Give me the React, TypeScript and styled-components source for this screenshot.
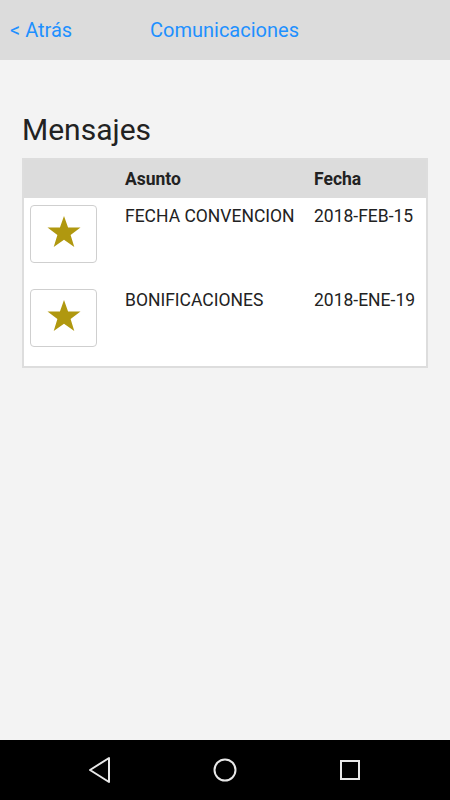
import styled, { createGlobalStyle } from 'styled-components';

const GlobalStyle = createGlobalStyle`
  html, body, #root {
    margin: 0;
    padding: 0;
    height: 100%;
  }
  body {
    font-family: Roboto, "Noto Sans", sans-serif;
    background-color: #f3f3f3;
  }
`;

const Screen = styled.div`
  display: flex;
  flex-direction: column;
  height: 100vh;
`;

const TopBar = styled.header`
  height: 60px;
  flex-shrink: 0;
  background-color: #dcdcdc;
  display: flex;
  align-items: center;
  padding: 0 10px;
  box-sizing: border-box;
  font-size: 20px;
  color: #1e90ff;
`;

const BackLink = styled.span`
  width: 140px;
`;

const Title = styled.span``;

const Main = styled.main`
  flex: 1;
  padding: 50px 22px 0;
`;

const Heading = styled.h1`
  margin: 0 0 8px;
  font-size: 30px;
  font-weight: 400;
  line-height: 40px;
  color: #222;
`;

const Table = styled.div`
  background-color: #dddddd;
  padding: 2px;
`;

const Row = styled.div<{ $head?: boolean }>`
  display: grid;
  grid-template-columns: 101px 189px 1fr;
  height: ${(p) => (p.$head ? '38px' : '84px')};
  align-items: ${(p) => (p.$head ? 'center' : 'start')};
  background-color: ${(p) => (p.$head ? '#dcdcdc' : '#fff')};
  font-size: 17.5px;
  color: #222;
  font-weight: ${(p) => (p.$head ? 700 : 400)};
`;

const Cell = styled.div`
  padding-top: 8px;
`;

const HeadCell = styled.div``;

const StarButton = styled.button`
  margin: 7px 0 0 6px;
  width: 67px;
  height: 58px;
  border: 1px solid #cfcfcf;
  border-radius: 4px;
  background: #fff;
  display: flex;
  align-items: center;
  justify-content: center;
  padding: 0 0 6px;
  box-sizing: border-box;
`;

const NavBar = styled.nav`
  height: 60px;
  flex-shrink: 0;
  background-color: #000;
  display: grid;
  grid-template-columns: repeat(3, 125px);
  justify-content: center;
  align-items: center;
  justify-items: center;
`;

const Star = () => (
  <svg width="36" height="33" viewBox="0 0 36 34">
    <polygon
      points="18,1 22.2,13 35,13 24.8,20.7 28.6,33 18,25.6 7.4,33 11.2,20.7 1,13 13.8,13"
      fill="#b0980f"
    />
  </svg>
);

const messages = [
  { subject: 'FECHA CONVENCION', date: '2018-FEB-15' },
  { subject: 'BONIFICACIONES', date: '2018-ENE-19' },
];

export default function App() {
  return (
    <>
      <GlobalStyle />
      <Screen>
        <TopBar>
          <BackLink>&lt; Atrás</BackLink>
          <Title>Comunicaciones</Title>
        </TopBar>
        <Main>
          <Heading>Mensajes</Heading>
          <Table>
            <Row $head>
              <HeadCell />
              <HeadCell>Asunto</HeadCell>
              <HeadCell>Fecha</HeadCell>
            </Row>
            {messages.map((m) => (
              <Row key={m.subject}>
                <div>
                  <StarButton>
                    <Star />
                  </StarButton>
                </div>
                <Cell>{m.subject}</Cell>
                <Cell>{m.date}</Cell>
              </Row>
            ))}
          </Table>
        </Main>
        <NavBar>
          <svg width="24" height="28" viewBox="0 0 24 28">
            <polygon points="21,2 21,26 2,14" fill="none" stroke="#e8e8e8" strokeWidth="2" strokeLinejoin="round" />
          </svg>
          <svg width="26" height="26" viewBox="0 0 26 26">
            <circle cx="13" cy="13" r="10.5" fill="none" stroke="#e8e8e8" strokeWidth="2" />
          </svg>
          <svg width="22" height="22" viewBox="0 0 22 22">
            <rect x="2" y="2" width="18" height="18" fill="none" stroke="#e8e8e8" strokeWidth="2" />
          </svg>
        </NavBar>
      </Screen>
    </>
  );
}
